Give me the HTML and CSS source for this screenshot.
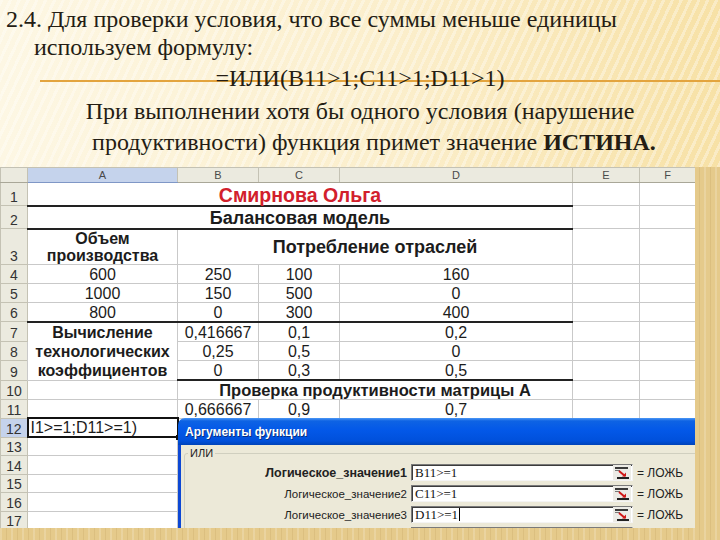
FILE: index.html
```html
<!DOCTYPE html>
<html>

<head>
    <meta charset="UTF-8">
    <title>Проверка продуктивности</title>
    <link rel="stylesheet" href="styles.css">
</head>

<body>
    <div class="slide">
        <div class="text">
            <p class="lead">2.4. Для проверки условия, что все суммы меньше единицы<br>используем формулу:</p>
            <p class="formula">=ИЛИ(B11&gt;1;C11&gt;1;D11&gt;1)</p>
            <p class="note">При выполнении хотя бы одного условия (нарушение<br><span class="shift">продуктивности) функция примет значение <b>ИСТИНА.</b></span></p>
        </div>

        <div class="shot">
            <div class="sheet">
                <table>
                    <colgroup>
                        <col class="c0">
                        <col class="ca">
                        <col class="cb">
                        <col class="cc">
                        <col class="cd">
                        <col class="ce">
                        <col class="cf">
                    </colgroup>
                    <tr class="head">
                        <th class="corner"></th>
                        <th class="on">A</th>
                        <th>B</th>
                        <th>C</th>
                        <th>D</th>
                        <th>E</th>
                        <th>F</th>
                    </tr>
                    <tr class="r23">
                        <th class="num">1</th>
                        <td colspan="4" class="title red bb">Смирнова Ольга</td>
                        <td></td>
                        <td></td>
                    </tr>
                    <tr class="r23">
                        <th class="num">2</th>
                        <td colspan="4" class="title bb">Балансовая модель</td>
                        <td></td>
                        <td></td>
                    </tr>
                    <tr class="r36">
                        <th class="num">3</th>
                        <td class="bold">Объем<br>производства</td>
                        <td colspan="3" class="title mid">Потребление отраслей</td>
                        <td></td>
                        <td></td>
                    </tr>
                    <tr>
                        <th class="num">4</th>
                        <td>600</td>
                        <td>250</td>
                        <td>100</td>
                        <td>160</td>
                        <td></td>
                        <td></td>
                    </tr>
                    <tr>
                        <th class="num">5</th>
                        <td>1000</td>
                        <td>150</td>
                        <td>500</td>
                        <td>0</td>
                        <td></td>
                        <td></td>
                    </tr>
                    <tr class="bb">
                        <th class="num">6</th>
                        <td>800</td>
                        <td>0</td>
                        <td>300</td>
                        <td>400</td>
                        <td class="plain"></td>
                        <td class="plain"></td>
                    </tr>
                    <tr>
                        <th class="num">7</th>
                        <td rowspan="3" class="bold coef">Вычисление<br>технологических<br>коэффициентов</td>
                        <td>0,416667</td>
                        <td>0,1</td>
                        <td>0,2</td>
                        <td></td>
                        <td></td>
                    </tr>
                    <tr>
                        <th class="num">8</th>
                        <td>0,25</td>
                        <td>0,5</td>
                        <td>0</td>
                        <td></td>
                        <td></td>
                    </tr>
                    <tr class="bb">
                        <th class="num">9</th>
                        <td>0</td>
                        <td>0,3</td>
                        <td>0,5</td>
                        <td class="plain"></td>
                        <td class="plain"></td>
                    </tr>
                    <tr>
                        <th class="num">10</th>
                        <td></td>
                        <td colspan="3" class="bold check">Проверка продуктивности матрицы А</td>
                        <td></td>
                        <td></td>
                    </tr>
                    <tr>
                        <th class="num">11</th>
                        <td></td>
                        <td>0,666667</td>
                        <td>0,9</td>
                        <td>0,7</td>
                        <td></td>
                        <td></td>
                    </tr>
                    <tr class="low">
                        <th class="num on">12</th>
                        <td class="sel">I1&gt;=1;D11&gt;=1)<span class="handle"></span></td>
                        <td></td>
                        <td></td>
                        <td></td>
                        <td></td>
                        <td></td>
                    </tr>
                    <tr class="low">
                        <th class="num">13</th>
                        <td></td><td></td><td></td><td></td><td></td><td></td>
                    </tr>
                    <tr class="low">
                        <th class="num">14</th>
                        <td></td><td></td><td></td><td></td><td></td><td></td>
                    </tr>
                    <tr class="low">
                        <th class="num">15</th>
                        <td></td><td></td><td></td><td></td><td></td><td></td>
                    </tr>
                    <tr class="low">
                        <th class="num">16</th>
                        <td></td><td></td><td></td><td></td><td></td><td></td>
                    </tr>
                    <tr class="low">
                        <th class="num">17</th>
                        <td></td><td></td><td></td><td></td><td></td><td></td>
                    </tr>
                </table>

                <!-- окно мастера функций поверх листа -->
                <div class="dialog">
                    <div class="caption">Аргументы функции</div>
                    <div class="dbody">
                        <fieldset class="group">
                            <legend>ИЛИ</legend>
                            <div class="arg">
                                <span class="label main">Логическое_значение1</span>
                                <span class="field">B11&gt;=1<svg class="pick" width="18" height="15" viewBox="0 0 18 15"><rect x="0" y="0" width="18" height="15" fill="#ecebe6"/><rect x="2" y="2" width="13" height="2" fill="#3a3a3a"/><rect x="2" y="5" width="5" height="1" fill="#777"/><path d="M6 6 L12 11" stroke="#d01818" stroke-width="2"/><path d="M9 11.5 L13 11.5 L13 7.5 Z" fill="#d01818"/><rect x="4" y="12" width="12" height="2" fill="#222"/></svg></span>
                                <span class="res">= ЛОЖЬ</span>
                            </div>
                            <div class="arg">
                                <span class="label">Логическое_значение2</span>
                                <span class="field">C11&gt;=1<svg class="pick" width="18" height="15" viewBox="0 0 18 15"><rect x="0" y="0" width="18" height="15" fill="#ecebe6"/><rect x="2" y="2" width="13" height="2" fill="#3a3a3a"/><rect x="2" y="5" width="5" height="1" fill="#777"/><path d="M6 6 L12 11" stroke="#d01818" stroke-width="2"/><path d="M9 11.5 L13 11.5 L13 7.5 Z" fill="#d01818"/><rect x="4" y="12" width="12" height="2" fill="#222"/></svg></span>
                                <span class="res">= ЛОЖЬ</span>
                            </div>
                            <div class="arg">
                                <span class="label">Логическое_значение3</span>
                                <span class="field">D11&gt;=1<span class="caret"></span><svg class="pick" width="18" height="15" viewBox="0 0 18 15"><rect x="0" y="0" width="18" height="15" fill="#ecebe6"/><rect x="2" y="2" width="13" height="2" fill="#3a3a3a"/><rect x="2" y="5" width="5" height="1" fill="#777"/><path d="M6 6 L12 11" stroke="#d01818" stroke-width="2"/><path d="M9 11.5 L13 11.5 L13 7.5 Z" fill="#d01818"/><rect x="4" y="12" width="12" height="2" fill="#222"/></svg></span>
                                <span class="res">= ЛОЖЬ</span>
                            </div>
                            <div class="arg">
                                <span class="label"></span>
                                <span class="field"></span>
                                <span class="res"></span>
                            </div>
                        </fieldset>
                    </div>
                </div>
            </div>
        </div>
    </div>
</body>

</html>
```

FILE: styles.css
```css
html,
body {
    margin: 0;
}

body {
    width: 720px;
    height: 540px;
    overflow: hidden;
    font-family: "Liberation Serif", "Times New Roman", serif;
    background:
        repeating-linear-gradient(115deg, rgba(255, 255, 255, 0.35) 0 3px, rgba(255, 255, 255, 0) 3px 8px),
        linear-gradient(90deg, #fdf7e4 0%, #fbeecb 55%, #f7e1a6 100%);
}

.slide {
    height: 540px;
    display: flex;
    flex-direction: column;
}

/* текст слайда */
.text {
    height: 167px;
    box-sizing: border-box;
    padding-top: 5px;
    color: #241d14;
    font-size: 24px;
}

.text p {
    margin: 0;
}

.lead {
    line-height: 28px;
    padding-left: 34px;
    text-indent: -28px;
}

.formula {
    margin-top: 2px !important;
    line-height: 31px;
    text-align: center;
    /* оранжевая линия-разделитель под формулой */
    background: linear-gradient(#e3a43e, #e3a43e) no-repeat 40px 17px / 680px 2px;
}

.note {
    margin-top: 2px !important;
    line-height: 31px;
    text-align: center;
}

.shift {
    padding-left: 28px;
}

/* картинка с листом Excel */
.shot {
    flex: 1;
    padding: 0 25px 12px 0;
    background:
        repeating-linear-gradient(90deg, rgba(255, 255, 255, 0.18) 0 2px, rgba(0, 0, 0, 0) 2px 6px, rgba(150, 110, 40, 0.12) 6px 7px, rgba(0, 0, 0, 0) 7px 11px),
        #e5ca8b;
}

.sheet {
    position: relative;
    width: 695px;
    height: 361px;
    overflow: hidden;
    background: #fff;
}

table {
    border-collapse: collapse;
    table-layout: fixed;
    width: 695px;
    font-family: "Liberation Sans", Arial, sans-serif;
    font-size: 16px;
    color: #1c1c1c;
}

.c0 { width: 27px; }
.ca { width: 150px; }
.cb { width: 81px; }
.cc { width: 81px; }
.cd { width: 233px; }
.ce { width: 67px; }
.cf { width: 56px; }

tr {
    height: 19px;
}

tr.low {
    height: 18.5px;
}

tr.head {
    height: 15px;
}

tr.r23 {
    height: 23px;
}

tr.r36 {
    height: 36px;
}

td,
th {
    padding: 0;
    border: 1px solid #c9c9c9;
    text-align: center;
    vertical-align: bottom;
    line-height: 17px;
    white-space: nowrap;
}

th {
    font-weight: normal;
    background: #ebeadf;
    border-color: #c4c2b4;
}

.head th {
    font-size: 11px;
    line-height: 13px;
    color: #4a4a4a;
    border-bottom-color: #a9a798;
}

.num {
    font-size: 14px;
    line-height: 16px;
    color: #333;
}

th.on {
    background: #c5d3ec;
}

.head th.on {
    border-bottom-color: #7f97c6;
}

.title {
    font-size: 18px;
    font-weight: bold;
    line-height: 20px;
}

.red {
    color: #d2202c;
    font-size: 19.5px;
}

.mid {
    vertical-align: middle;
}

.bold {
    font-weight: bold;
}

.check {
    font-size: 16.5px;
}

.coef {
    line-height: 19px;
    vertical-align: top;
}

tr.bb td,
td.bb {
    border-bottom: 2px solid #222;
}

tr.bb td.plain {
    border-bottom: 1px solid #c9c9c9;
}

td.sel {
    position: relative;
    border: 2px solid #111;
    text-align: left;
    padding-left: 2px;
}

.handle {
    position: absolute;
    right: -4px;
    bottom: -4px;
    width: 5px;
    height: 5px;
    background: #111;
}

/* окно "Аргументы функции" */
.dialog {
    position: absolute;
    left: 178px;
    top: 251px;
    width: 560px;
    height: 130px;
    font-family: "Liberation Sans", Tahoma, sans-serif;
}

.caption {
    height: 27px;
    box-sizing: border-box;
    padding: 7px 0 0 7px;
    border-top-left-radius: 7px;
    background: linear-gradient(#4b97f5 0, #0e63e4 3px, #0358e8 45%, #0050db 85%, #0043b8 100%);
    color: #fff;
    font-size: 12px;
    font-weight: bold;
    text-shadow: 1px 1px #0a2f80;
}

.dbody {
    height: 110px;
    border-left: 3px solid #0d48d4;
    background: #ece9d8;
    padding: 2px 0 0 3px;
}

.group {
    margin: 0;
    padding: 4px 0 0 0;
    border: 1px solid #d0cfbf;
    border-radius: 3px;
}

.group legend {
    margin-left: 3px;
    padding: 0 2px;
    font-size: 11px;
    line-height: 13px;
    color: #222;
}

.arg {
    display: grid;
    grid-template-columns: 222px 222px auto;
    column-gap: 4px;
    align-items: center;
    height: 17px;
    margin-bottom: 4px;
}

.label {
    text-align: right;
    font-size: 11.5px;
    color: #222;
}

.label.main {
    font-weight: bold;
    font-size: 12.5px;
}

.field {
    position: relative;
    height: 17px;
    box-sizing: border-box;
    padding: 1px 0 0 3px;
    background: #fff;
    border: 1px solid;
    border-color: #7a7a7a #f4f4f4 #f4f4f4 #7a7a7a;
    box-shadow: inset 1px 1px #3c3c3c;
    font-family: "Liberation Serif", serif;
    font-size: 13px;
    line-height: 14px;
    color: #111;
}

.pick {
    position: absolute;
    right: 1px;
    top: 0;
}

.caret {
    display: inline-block;
    width: 1px;
    height: 13px;
    margin-left: 1px;
    vertical-align: -2px;
    background: #000;
}

.res {
    font-size: 12px;
    color: #222;
}
```
